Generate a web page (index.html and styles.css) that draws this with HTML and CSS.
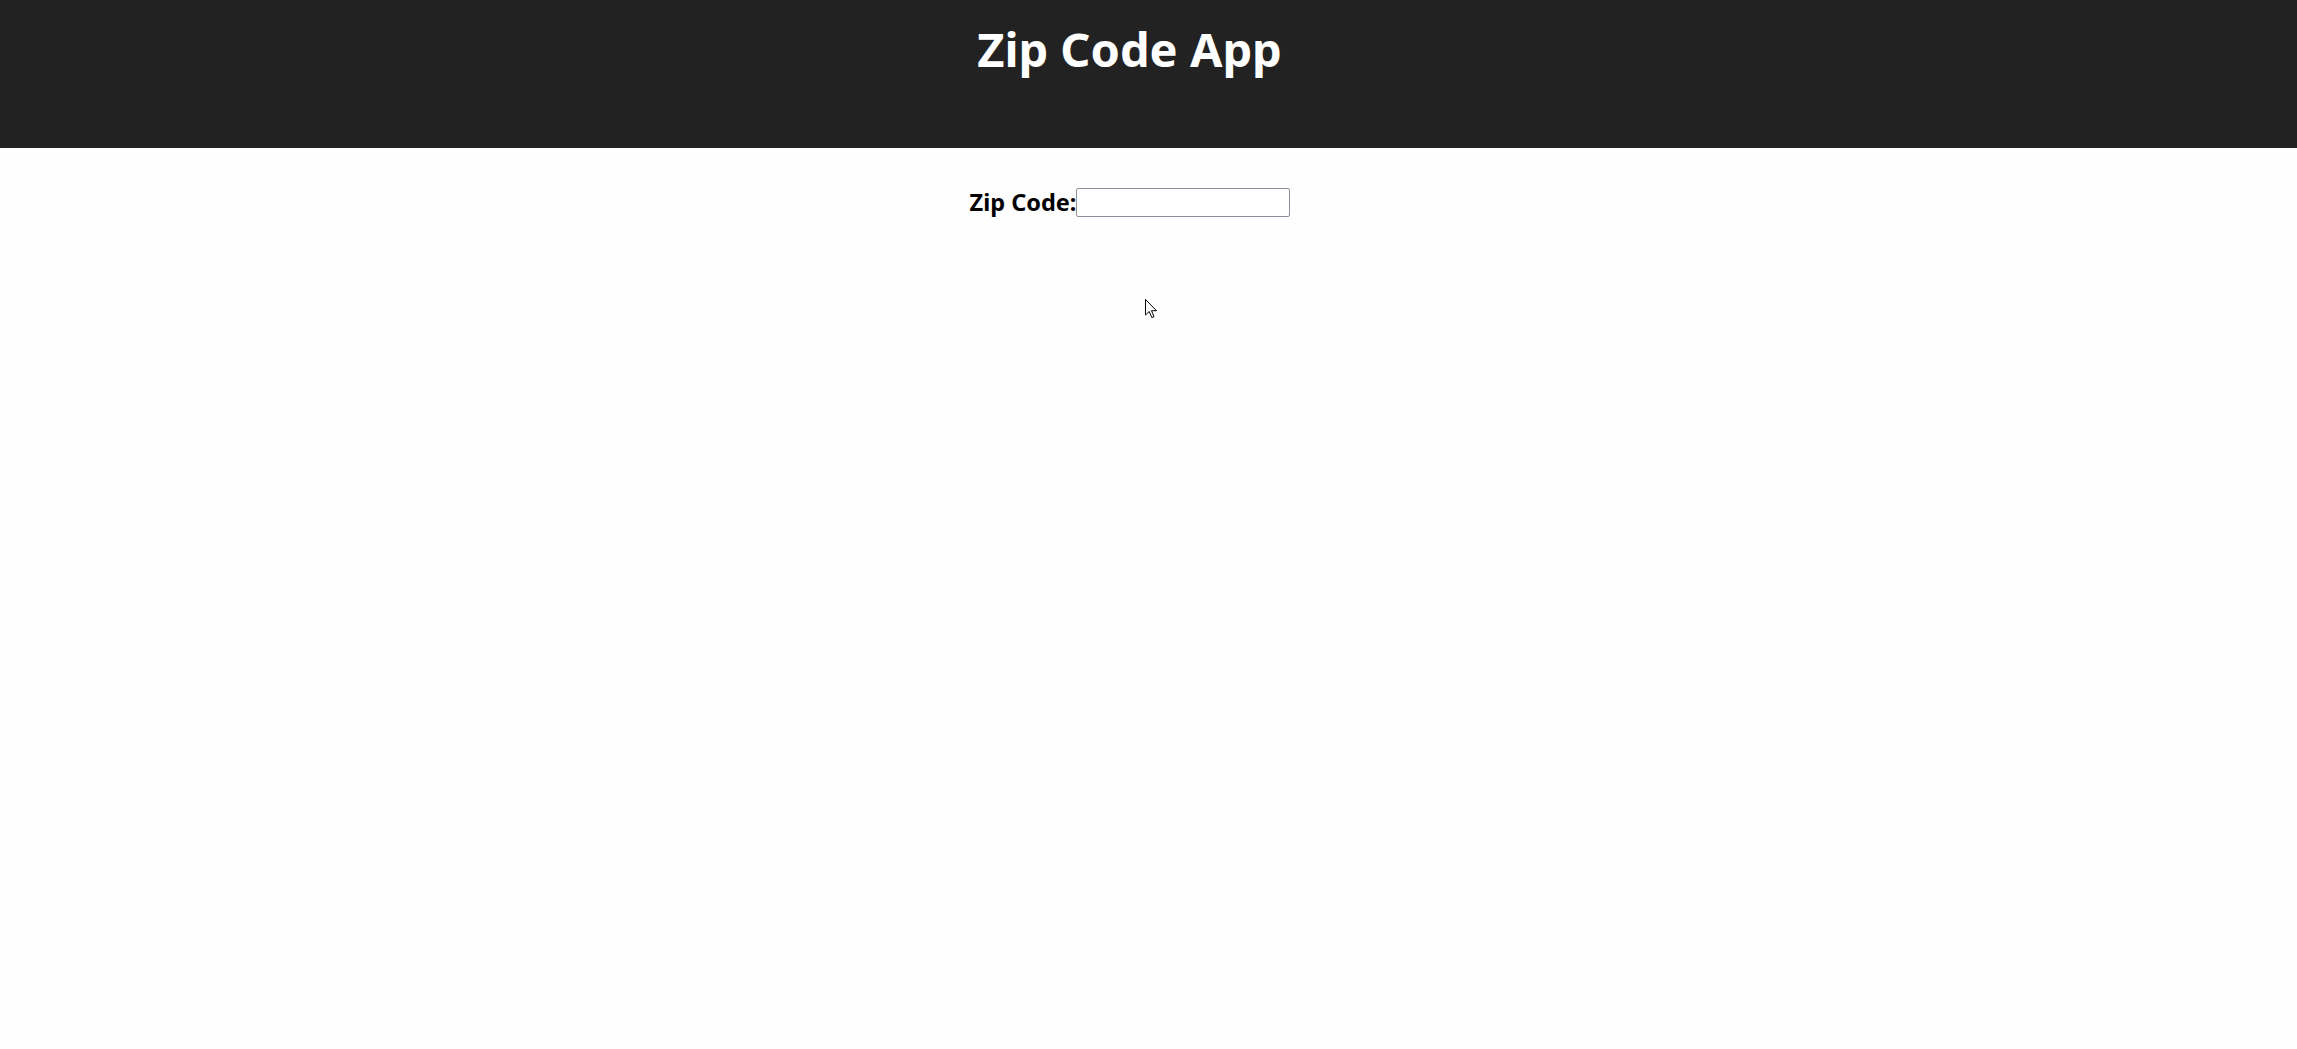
FILE: index.html
```html
<!DOCTYPE html>
<html lang="en">
<head>
<meta charset="utf-8">
<title>Zip Code App</title>
<link rel="stylesheet" href="styles.css">
</head>
<body>
<header class="app-header">
  <h1 class="app-title">Zip Code App</h1>
</header>
<main class="app-main">
  <form class="zip-form">
    <label class="zip-label" for="zip">Zip Code:</label>
    <input class="zip-input" id="zip" type="text">
  </form>
</main>
<svg class="cursor" width="13" height="21" viewBox="0 0 13 21" aria-hidden="true">
  <path d="M0.5 0.5 L0.5 16 L4.2 12.5 L6.8 18.6 L9 17.6 L6.5 11.7 L11.5 11.7 Z" fill="#fff" stroke="#000" stroke-width="1" stroke-linejoin="miter"/>
</svg>
</body>
</html>
```

FILE: styles.css
```css
html, body {
  margin: 0;
  padding: 0;
}
body {
  background: #fefefe;
  font-family: "Noto Sans", "Open Sans", "DejaVu Sans", sans-serif;
  min-height: 100vh;
  position: relative;
}
.app-header {
  background: #222222;
  height: 148px;
  box-sizing: border-box;
  padding: 19px 38px 0 0;
  display: flex;
  justify-content: center;
}
.app-title {
  margin: 0;
  color: #ffffff;
  font-size: 47px;
  font-weight: 700;
  line-height: 60px;
}
.app-main {
  padding: 38px 37px 0 0;
  display: flex;
  justify-content: center;
}
.zip-form {
  display: flex;
  align-items: center;
}
.zip-label {
  font-size: 23.5px;
  font-weight: 700;
  color: #000;
}
.zip-input {
  width: 214px;
  height: 29px;
  box-sizing: border-box;
  border: 1px solid #8f8f9d;
  border-radius: 2px;
  padding: 2px 4px;
  margin: 0;
  background: #fff;
}
.cursor {
  position: absolute;
  left: 1145px;
  top: 299px;
}
```
